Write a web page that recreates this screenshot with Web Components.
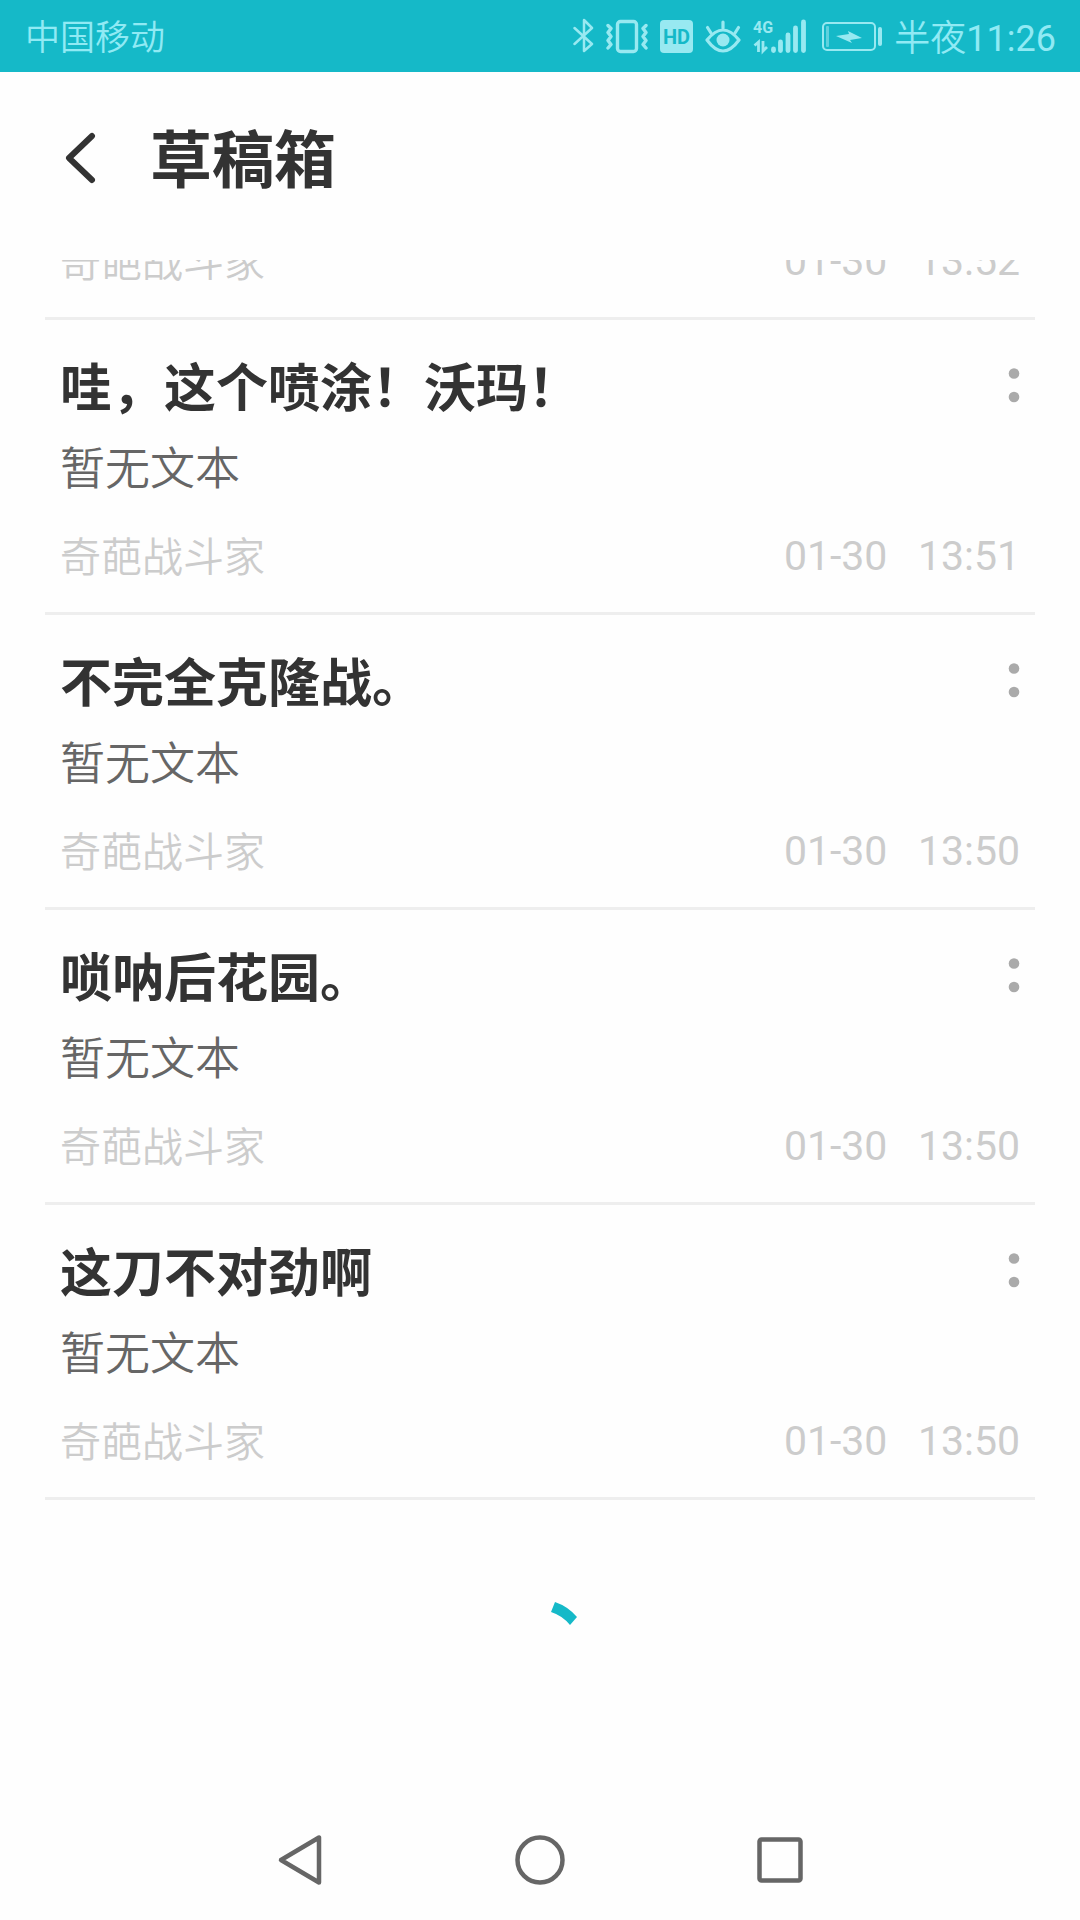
<!DOCTYPE html>
<html lang="zh-CN">
<head>
<meta charset="utf-8">
<meta name="viewport" content="width=device-width, initial-scale=1">
<title>草稿箱</title>
<style>
  html, body { margin: 0; background: #fefefe; }
  body { font-family: Roboto, "Noto Sans CJK SC", sans-serif; color: #333; }
</style>
</head>
<body>
<draft-app>
  <phone-status carrier="中国移动" period="半夜" time="11:26"></phone-status>
  <page-header>草稿箱</page-header>
  <draft-item partial author="奇葩战斗家" date="01-30" time="13:52"></draft-item>
  <draft-item author="奇葩战斗家" date="01-30" time="13:51">哇，这个喷涂！沃玛！<span slot="body">暂无文本</span></draft-item>
  <draft-item author="奇葩战斗家" date="01-30" time="13:50">不完全克隆战。<span slot="body">暂无文本</span></draft-item>
  <draft-item author="奇葩战斗家" date="01-30" time="13:50">唢呐后花园。<span slot="body">暂无文本</span></draft-item>
  <draft-item author="奇葩战斗家" date="01-30" time="13:50">这刀不对劲啊<span slot="body">暂无文本</span></draft-item>
  <load-spinner></load-spinner>
  <system-nav slot="nav"></system-nav>
</draft-app>

<script>
class BaseElement extends HTMLElement {
  constructor() {
    super();
    this.attachShadow({ mode: 'open' });
  }
  connectedCallback() {
    this.shadowRoot.innerHTML = this.render();
  }
}

customElements.define('draft-app', class extends BaseElement {
  render() {
    return `
    <style>
      :host { display: flex; flex-direction: column; min-height: 100vh; }
      main { flex: 1; display: flex; flex-direction: column; }
    </style>
    <main><slot></slot></main>
    <slot name="nav"></slot>`;
  }
});

customElements.define('phone-status', class extends BaseElement {
  render() {
    return `
    <style>
      :host { display: flex; align-items: center; justify-content: space-between; height: 72px;
              padding: 0 24px 0 25px; background: #15b9c8; color: #90eaf4; font-size: 36px; line-height: 48px; font-weight: 350; }
      span { padding-top: 5px; }
      .carrier { font-size: 35px; }
      time { font-weight: 400; }
      .right { display: flex; align-items: center; gap: 12px; }
      svg { display: block; fill: none; stroke: #98e9f1; }
      text { fill: #98e9f1; stroke: none; font-family: Roboto, sans-serif; font-weight: 700; }
      .net { overflow: visible; }
    </style>
    <span class="carrier">${this.getAttribute('carrier')}</span>
    <div class="right">
      <svg width="21" height="36" viewBox="0 0 21 36" stroke-width="2.5" stroke-linejoin="round" stroke-linecap="round"><path d="M1.5 10 19 26 11 33V2L19 10 1.5 26"/></svg>
      <svg width="42" height="36" viewBox="0 0 42 36" stroke-width="3.4" stroke-linecap="round" stroke-linejoin="round">
        <rect x="11.5" y="3.5" width="19" height="30" rx="3"/>
        <path d="M2 7.5 5 10.5 2 14.5 5 18.5 2 22.5 5 26.5 2 30M40 7.5 37 10.5 40 14.5 37 18.5 40 22.5 37 26.5 40 30"/>
      </svg>
      <svg width="33" height="36" viewBox="0 0 33 36">
        <rect x="0" y="2" width="33" height="33" rx="4" fill="#98e9f1" stroke="none"/>
        <text x="16.5" y="26" font-size="20" text-anchor="middle" style="fill:#15b9c8">HD</text>
      </svg>
      <svg width="36" height="36" viewBox="0 0 36 36" stroke-width="3.2" stroke-linecap="round">
        <path d="M2 22Q18 2 34 22Q18 44 2 22Z" stroke-linejoin="round"/>
        <circle cx="18" cy="22" r="6.5" fill="#98e9f1" stroke="none"/>
        <path d="M18 4V10M2.5 9.5 6 15M33.5 9.5 30 15"/>
      </svg>
      <svg class="net" width="53" height="36" viewBox="0 0 53 36">
        <text x="0" y="15" font-size="16">4G</text>
        <path d="M1.5 27.5 5.5 24V34M10 23V33L14 29" stroke-width="2.8"/>
        <path d="M20.5 31V32.5M27.5 24V32.5M35 17V32.5M42.5 10V32.5M50.5 4V32.5" stroke-width="4.8" stroke-linecap="round"/>
      </svg>
      <svg width="64" height="36" viewBox="0 0 64 36">
        <rect x="5" y="5" width="52" height="27" rx="4" stroke-width="2"/>
        <rect x="8" y="8" width="3" height="21" rx="1" fill="#5fd2de" stroke="none"/>
        <path d="M18 18 31 16 30 13 44 20 32 22 34 25Z" fill="#98e9f1" stroke="none"/>
        <rect x="60" y="9" width="4" height="19" rx="2" fill="#98e9f1" stroke="none"/>
      </svg>
      <span>${this.getAttribute('period')}<time>${this.getAttribute('time')}</time></span>
    </div>`;
  }
});

customElements.define('page-header', class extends BaseElement {
  render() {
    return `
    <style>
      :host { display: flex; align-items: center; gap: 35px; height: 188px; padding: 0 45px 16px; box-sizing: border-box; }
      button { width: 70px; height: 80px; padding: 0; border: 0; background: none; display: flex; align-items: center; justify-content: center; }
      svg { display: block; }
      h1 { margin: 0; padding-top: 8px; font-size: 62px; line-height: 80px; font-weight: 700; }
    </style>
    <button type="button" aria-label="返回"><svg width="44" height="52" viewBox="0 0 44 52" fill="none" stroke="#333" stroke-width="6" stroke-linecap="round" stroke-linejoin="round"><path d="M34 4 11 26 34 48"/></svg></button>
    <h1><slot></slot></h1>`;
  }
});

customElements.define('draft-item', class extends BaseElement {
  render() {
    const partial = this.hasAttribute('partial');
    return `
    <style>
      :host { display: flex; flex-direction: column; margin: 0 45px; padding: 35px 15px 32px; border-bottom: 3px solid #eee; }
      :host([partial]) { height: 60px; padding: 0 15px; box-sizing: border-box; overflow: hidden; justify-content: flex-end; }
      :host([partial]) footer { margin: 0 0 32px; flex: none; }
      .top { display: flex; justify-content: space-between; align-items: center; height: 60px; }
      h2 { margin: 0; font-size: 52px; line-height: 60px; font-weight: 700; font-family: "Noto Sans CJK SC", sans-serif; }
      p { margin: 28px 0 0; font-size: 45px; line-height: 54px; color: #666; font-weight: 350; }
      footer { margin-top: 35px; display: flex; justify-content: space-between; height: 48px; font-size: 41px; line-height: 48px; color: #ccc; }
      .author { padding-top: 2px; font-weight: 350; }
      time { white-space: pre; }
      button { width: 30px; height: 60px; margin-right: -8px; padding: 0; border: 0; background: none; }
      svg { display: block; }
    </style>
    ${partial ? '' : `
    <div class="top">
      <h2><slot></slot></h2>
      <button type="button" aria-label="更多"><svg width="30" height="60" viewBox="0 0 30 60" fill="#aaa"><circle cx="16" cy="18.5" r="5.3"/><circle cx="16" cy="42" r="5.3"/></svg></button>
    </div>
    <p><slot name="body"></slot></p>`}
    <footer><span class="author">${this.getAttribute('author')}</span><time>${this.getAttribute('date')}   ${this.getAttribute('time')}</time></footer>`;
  }
});

customElements.define('load-spinner', class extends BaseElement {
  render() {
    return `
    <style>
      :host { display: flex; flex: 1; align-items: center; justify-content: center; min-height: 120px; }
      svg { display: block; }
    </style>
    <svg width="100" height="100" viewBox="-50 -50 100 100" fill="#15b9c8" role="img" aria-label="加载中"><path d="M15 -48A50 50 0 0 1 37 -33L30 -25A40 40 0 0 0 11 -38Z"/></svg>`;
  }
});

customElements.define('system-nav', class extends BaseElement {
  render() {
    return `
    <style>
      :host { display: grid; grid-template-columns: repeat(3, 1fr); height: 120px; padding: 0 16.67%; }
      button { padding: 0; border: 0; background: none; display: flex; align-items: center; justify-content: center; }
      svg { display: block; fill: none; stroke: #666; stroke-width: 4.5; stroke-linejoin: round; }
    </style>
    <button type="button" aria-label="返回"><svg width="52" height="52" viewBox="0 0 52 52"><path d="M45 3.5V48.5L7 26Z"/></svg></button>
    <button type="button" aria-label="主屏幕"><svg width="52" height="52" viewBox="0 0 52 52"><circle cx="26" cy="26" r="22.5"/></svg></button>
    <button type="button" aria-label="最近任务"><svg width="52" height="52" viewBox="0 0 52 52"><rect x="5.5" y="5.5" width="41" height="41" rx="2"/></svg></button>`;
  }
});
</script>
</body>
</html>
